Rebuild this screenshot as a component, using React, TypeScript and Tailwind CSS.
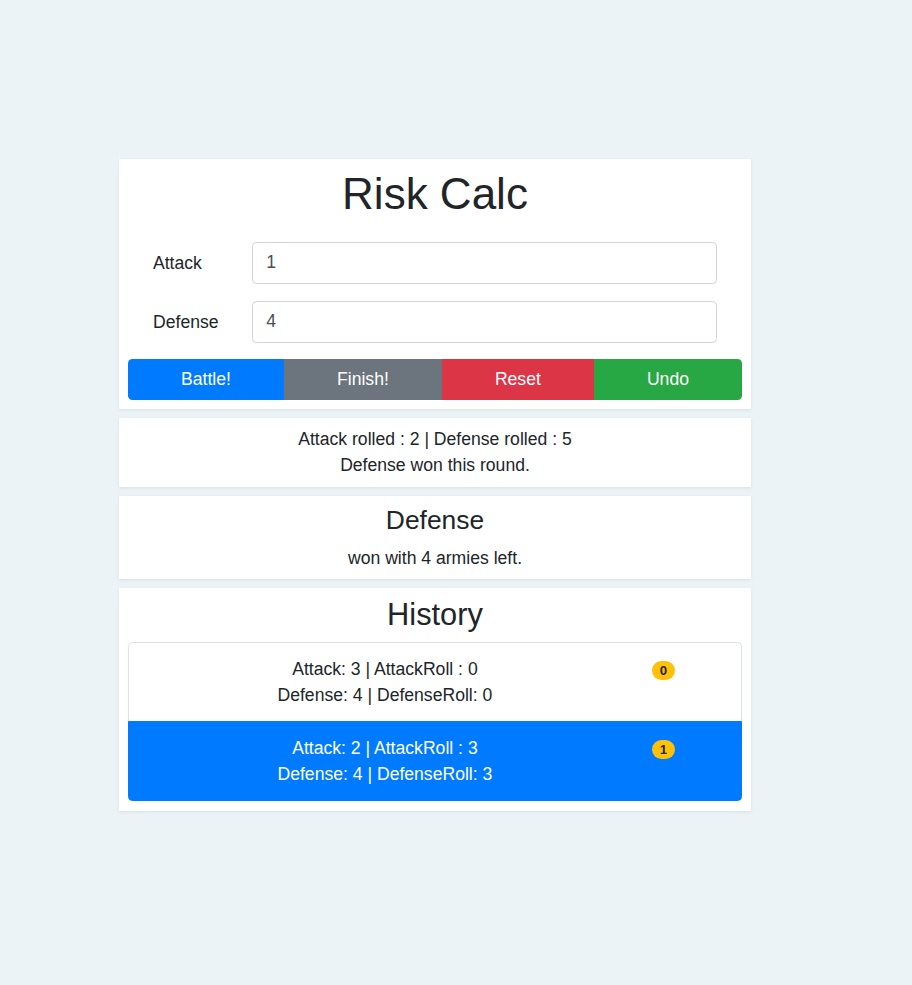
import React from "react";

const font = { fontFamily: '"Liberation Sans", Arial, sans-serif' };

interface HistoryRow {
  id: number;
  attack: number;
  attackRoll: number;
  defense: number;
  defenseRoll: number;
  active?: boolean;
}

const history: HistoryRow[] = [
  { id: 0, attack: 3, attackRoll: 0, defense: 4, defenseRoll: 0 },
  { id: 1, attack: 2, attackRoll: 3, defense: 4, defenseRoll: 3, active: true },
];

function Card({ className, children }: { className?: string; children: React.ReactNode }) {
  return (
    <div className={`bg-white shadow-[0_1px_3px_rgba(0,0,0,0.08)] ${className ?? ""}`}>
      {children}
    </div>
  );
}

function Field({ label, value }: { label: string; value: string }) {
  return (
    <div className="flex items-center px-[25px]">
      <label className="w-[99px] text-[17.6px] text-[#212529]">{label}</label>
      <input
        readOnly
        value={value}
        className="flex-1 h-[42px] rounded-[4.4px] border border-[#ced4da] bg-white px-[13.2px] text-[17.6px] text-[#495057] outline-none"
        style={font}
      />
    </div>
  );
}

export default function App() {
  return (
    <div className="min-h-[985px] bg-[#ebf3f6] pt-[159px] text-[#212529]" style={font}>
      <div className="ml-[119px] flex w-[632px] flex-col gap-[9px]">
        <Card className="p-[9px]">
          <h1 className="text-center text-[44px] leading-[1.2]">Risk Calc</h1>
          <div className="mt-[21px] flex flex-col gap-[17px]">
            <Field label="Attack" value="1" />
            <Field label="Defense" value="4" />
          </div>
          <div className="mt-[16px] flex h-[41px] overflow-hidden rounded-[4.4px] text-[17.6px] text-white">
            <button className="flex-auto bg-[#007bff] px-[13.2px]">Battle!</button>
            <button className="flex-auto bg-[#6c757d] px-[13.2px]">Finish!</button>
            <button className="flex-auto bg-[#dc3545] px-[13.2px]">Reset</button>
            <button className="flex-auto bg-[#28a745] px-[13.2px]">Undo</button>
          </div>
        </Card>

        <Card className="pt-[8px] pb-[8px] text-center text-[17.6px] leading-[26.4px]">
          <div>Attack rolled : 2 | Defense rolled : 5</div>
          <div>Defense won this round.</div>
        </Card>

        <Card className="pt-[9px] pb-[7px] text-center">
          <h4 className="text-[26.4px] leading-[1.2]">Defense</h4>
          <div className="mt-[9px] text-[17.6px] leading-[26.4px]">won with 4 armies left.</div>
        </Card>

        <Card className="px-[9px] pt-[9px] pb-[10px]">
          <h3 className="text-center text-[30.8px] leading-[1.2]">History</h3>
          <div className="mt-[8px] flex flex-col">
            {history.map((row) => (
              <div
                key={row.id}
                className={
                  row.active
                    ? "-mt-px rounded-b-[4.4px] border border-[#007bff] bg-[#007bff] px-[22px] py-[13px] text-white"
                    : "rounded-t-[4.4px] border border-[#dee2e6] bg-white px-[22px] py-[13px]"
                }
              >
                <div className="mx-[-16.5px] flex text-[17.6px] leading-[26px]">
                  <div className="w-10/12 px-[16.5px] text-center">
                    <div>
                      Attack: {row.attack} | AttackRoll : {row.attackRoll}
                    </div>
                    <div>
                      Defense: {row.defense} | DefenseRoll: {row.defenseRoll}
                    </div>
                  </div>
                  <div className="flex w-2/12 items-start px-[16.5px] pt-[5px]">
                    <span className="flex h-[19px] min-w-[23px] items-center justify-center rounded-full bg-[#ffc107] px-[7px] text-[13.2px] leading-none font-bold text-[#212529]">
                      {row.id}
                    </span>
                  </div>
                </div>
              </div>
            ))}
          </div>
        </Card>
      </div>
    </div>
  );
}
